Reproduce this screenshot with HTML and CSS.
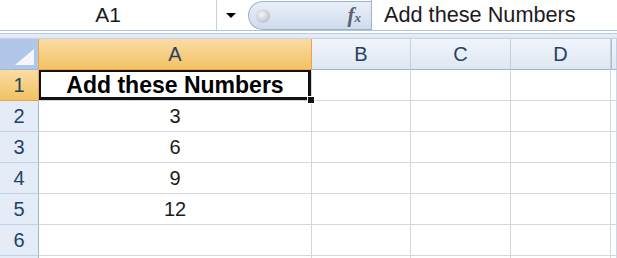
FILE: index.html
```html
<!DOCTYPE html>
<html lang="en">

<head>
    <meta charset="UTF-8">
    <meta name="viewport" content="width=device-width, initial-scale=1.0">
    <title>Add these Numbers</title>

    <link rel="stylesheet" href="styles.css">
</head>

<body>
    <div class="formula-bar">
        <div class="name-box">A1</div>
        <div class="name-drop"><span class="arrow"></span></div>
        <div class="capsule">
            <span class="knob"></span>
            <span class="fx">f<sub>x</sub></span>
        </div>
        <div class="formula-input">Add these Numbers</div>
    </div>
    <div class="bar-strip"></div>

    <div class="sheet">
        <div class="corner"><span class="corner-tri"></span></div>
        <div class="col-head active">A</div>
        <div class="col-head">B</div>
        <div class="col-head">C</div>
        <div class="col-head">D</div>
        <div class="col-head last"></div>

        <div class="row-head active">1</div>
        <div class="cell title selected">Add these Numbers<span class="fill-handle"></span></div>
        <div class="cell"></div>
        <div class="cell"></div>
        <div class="cell"></div>
        <div class="cell"></div>

        <div class="row-head">2</div>
        <div class="cell">3</div>
        <div class="cell"></div>
        <div class="cell"></div>
        <div class="cell"></div>
        <div class="cell"></div>

        <div class="row-head">3</div>
        <div class="cell">6</div>
        <div class="cell"></div>
        <div class="cell"></div>
        <div class="cell"></div>
        <div class="cell"></div>

        <div class="row-head">4</div>
        <div class="cell">9</div>
        <div class="cell"></div>
        <div class="cell"></div>
        <div class="cell"></div>
        <div class="cell"></div>

        <div class="row-head">5</div>
        <div class="cell">12</div>
        <div class="cell"></div>
        <div class="cell"></div>
        <div class="cell"></div>
        <div class="cell"></div>

        <div class="row-head">6</div>
        <div class="cell"></div>
        <div class="cell"></div>
        <div class="cell"></div>
        <div class="cell"></div>
        <div class="cell"></div>

        <div class="row-head"></div>
        <div class="cell"></div>
        <div class="cell"></div>
        <div class="cell"></div>
        <div class="cell"></div>
        <div class="cell"></div>
    </div>
</body>

</html>
```

FILE: styles.css
```css
body {
    font-family: "Liberation Sans", Arial, sans-serif;
    background-color: #fff;
    margin: 0;
    overflow: hidden;
    width: 617px;
    height: 258px;
}

/* formula bar */
.formula-bar {
    display: flex;
    height: 30px;
    border-bottom: 1px solid #b1c3d9;
    background-color: #fff;
}

.name-box {
    width: 216px;
    border-right: 1px solid #c8d0da;
    font-size: 21px;
    color: #1b1b1b;
    text-align: center;
    line-height: 30px;
}

.name-drop {
    width: 31px;
    display: flex;
    align-items: center;
    padding-left: 9px;
    box-sizing: border-box;
}

.arrow {
    width: 0;
    height: 0;
    border-left: 5px solid transparent;
    border-right: 5px solid transparent;
    border-top: 5px solid #000;
}

.capsule {
    width: 123px;
    margin-top: 1px;
    border: 1px solid #9cb3d2;
    border-right: none;
    border-radius: 15px 0 0 15px;
    background: linear-gradient(#e9eff8, #cfdbed);
    display: flex;
    align-items: center;
    justify-content: space-between;
    padding: 0 10px 0 7px;
    box-sizing: border-box;
}

.knob {
    width: 14px;
    height: 14px;
    border-radius: 50%;
    background: radial-gradient(circle at 40% 40%, #f4f5f7, #c3c9d2 65%, #a4adba);
}

.fx {
    font-family: "Liberation Serif", serif;
    font-style: italic;
    font-weight: bold;
    font-size: 21px;
    color: #5b6270;
    line-height: 1;
}

.fx sub {
    font-size: 13px;
    vertical-align: 0;
}

.formula-input {
    flex: 1;
    border-left: 1px solid #9cb3d2;
    padding-left: 12px;
    font-size: 21.7px;
    color: #1b1b1b;
    line-height: 30px;
}

.bar-strip {
    height: 8px;
    border-top: 2px solid #fff;
    box-sizing: border-box;
    background: linear-gradient(#b9cbe0 0, #b9cbe0 1px, #e6edf6 1px, #dfe7f2);
    border-bottom: 1px solid #c4d2e3;
}

/* sheet grid */
.sheet {
    display: grid;
    grid-template-columns: 39px 273px 99px 100px 100px 1fr;
    grid-auto-rows: 31px;
    height: 219px;
    overflow: hidden;
}

.corner {
    position: relative;
    background-color: #b0c7ea;
    border-right: 1px solid #f0a24a;
    border-bottom: 1px solid #9eb6ce;
}

.corner-tri {
    position: absolute;
    right: 4px;
    bottom: 4px;
    width: 0;
    height: 0;
    border-left: 19px solid transparent;
    border-bottom: 16px solid #f4f6fa;
}

.col-head {
    background: linear-gradient(#f1f5fb, #dde6f2);
    border-right: 1px solid #c3d0df;
    border-bottom: 1px solid #9eb6ce;
    color: #27415f;
    font-size: 20px;
    text-align: center;
    line-height: 30px;
}

.col-head.active {
    background: linear-gradient(#f9dca5, #f2c262);
    border-right-color: #f0a24a;
    border-bottom-color: #f0a24a;
}

.col-head.last {
    border-left: 1px solid #a9bdd3;
}

.row-head {
    background-color: #e4ecf7;
    border-right: 1px solid #9eb6ce;
    border-bottom: 1px solid #c3d0df;
    color: #27415f;
    font-size: 20px;
    text-align: center;
    line-height: 30px;
}

.row-head.active {
    background: linear-gradient(#f9dca5, #f2c262);
    border-right-color: #f0a24a;
    border-bottom-color: #f0a24a;
}

.cell {
    border-right: 1px solid #d0d7e5;
    border-bottom: 1px solid #d0d7e5;
    font-size: 20px;
    color: #1b1b1b;
    text-align: center;
    line-height: 30px;
}

.cell.title {
    font-weight: bold;
    font-size: 23px;
    color: #000;
}

.selected {
    position: relative;
    box-shadow: inset 2px 2px 0 #111, inset -3px -3px 0 #111;
}

.fill-handle {
    position: absolute;
    right: -4px;
    bottom: -4px;
    width: 6px;
    height: 6px;
    background-color: #111;
    border: 1px solid #fff;
}
```
